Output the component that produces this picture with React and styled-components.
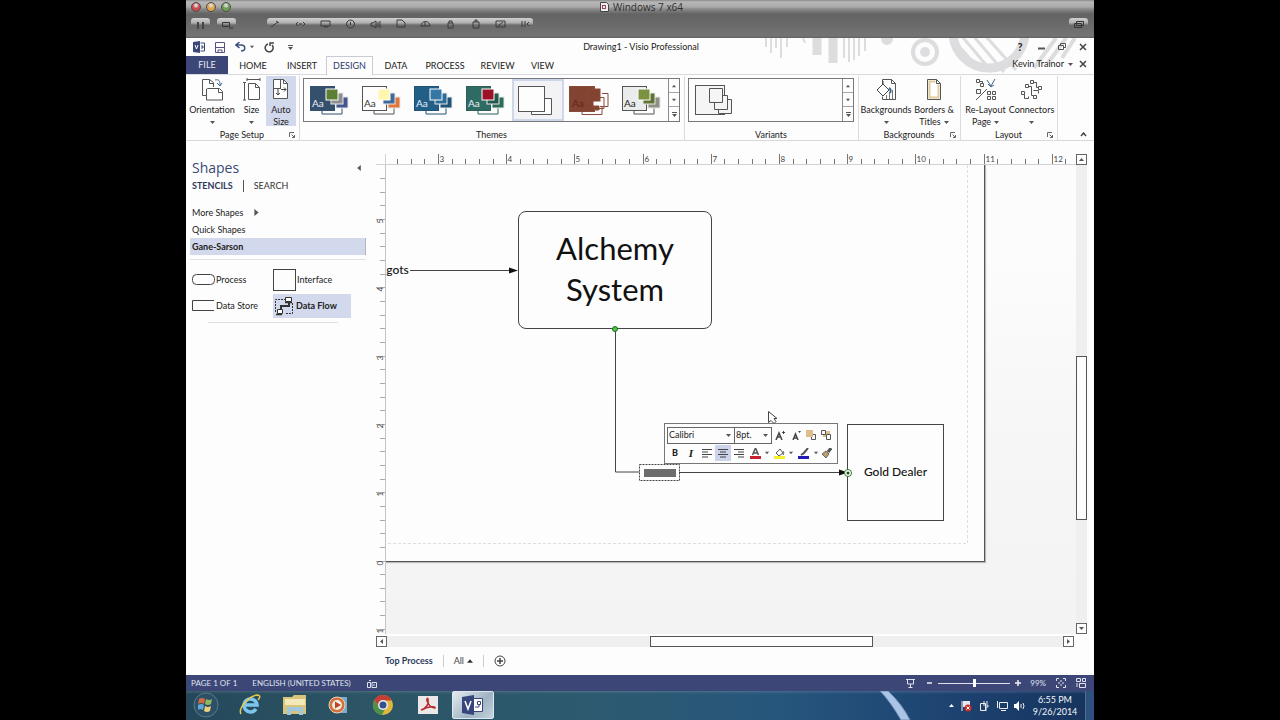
import React from "react";
import styled, { createGlobalStyle, css } from "styled-components";

const Global = createGlobalStyle`
  *, *::before, *::after { box-sizing: border-box; }
  body { margin: 0; background: #000; font-family: Lato, "Open Sans", sans-serif; font-size: 9px; line-height: 12px; color: #222; }
  button, select, input { font: inherit; color: inherit; margin: 0; padding: 0; border: 0; background: none; border-radius: 0; }
  button { cursor: default; }
  a { color: inherit; text-decoration: none; }
  svg { display: block; flex: none; }
  h2 { margin: 0; font-weight: 400; }
`;

/* ---------- frame ---------- */
const Screen = styled.div`
  min-height: 100vh;
  padding: 0 186px;
  display: flex;
  flex-direction: column;
`;
const Desktop = styled.div`
  flex: 1;
  min-width: 0;
  display: flex;
  flex-direction: column;
  background: #fdfdfd;
`;

/* ---------- virtual machine chrome ---------- */
const MacChrome = styled.header`
  height: 38px;
  padding: 0 6px 0 5px;
  background: linear-gradient(#8a8a8a 0, #b8b8b8 2px, #a9a9a9 7px, #8b8b8b 9px, #636363 14px, #686868 22px, #747474 36px, #606060 38px);
`;
const MacTitle = styled.div`
  height: 14px;
  display: grid;
  grid-template-columns: 1fr auto 1fr;
  align-items: center;
  color: #303030;
`;
const MacName = styled.span`
  display: flex;
  align-items: center;
  gap: 4px;
  padding-left: 4px;
  font-family: "Open Sans", sans-serif;
  font-size: 10px;
  line-height: 14px;
`;
const Lights = styled.div`
  display: flex;
  gap: 5px;
`;
const Light = styled.button`
  width: 10px;
  height: 10px;
  border-radius: 50%;
  border: 1px solid #4b4b4b;
  background: radial-gradient(circle at 50% 30%, #fff8 0 1px, ${(p) => p.$c} 3px);
`;
const MacTools = styled.div`
  display: flex;
  padding-top: 4px;
  gap: 7px;
`;
const MacPill = styled.div`
  height: 12px;
  padding: 0 ${(p) => p.$pad || 0}px;
  display: flex;
  gap: 11px;
  align-items: center;
  justify-content: center;
  border-radius: 3px 3px 0 0;
  background: linear-gradient(#d0d0d0, #b0b0b0 40%, #6a6a6a 60%, #6a6a6a00);
  margin-left: ${(p) => p.$left || "0"};
`;
const MacButton = styled.button`
  min-width: ${(p) => p.$w || 14}px;
  height: 12px;
  display: grid;
  place-items: center;
`;

/* ---------- application title & tabs ---------- */
const AppHead = styled.div`
  position: relative;
  border-bottom: 1px solid #d9d9dc;
`;
const Swirls = styled.svg`
  position: absolute;
  top: 0;
  right: 0;
`;
const TitleBar = styled.div`
  position: relative;
  height: 18px;
  display: grid;
  grid-template-columns: 1fr auto 1fr;
  align-items: center;
  padding: 0 5px 0 7px;
`;
const QuickAccess = styled.div`
  display: flex;
  align-items: center;
  gap: 9px;
`;
const WinButtons = styled.div`
  display: flex;
  justify-content: flex-end;
  gap: 9px;
`;
const IconButton = styled.button`
  min-width: 12px;
  height: 14px;
  display: flex;
  align-items: center;
  justify-content: center;
  gap: 4px;
  font-weight: ${(p) => (p.$bold ? 700 : 400)};
  font-size: ${(p) => (p.$bold ? 11 : 9)}px;
`;
const TabRow = styled.nav`
  position: relative;
  height: 18px;
  display: flex;
`;
const Tab = styled.button`
  width: ${(p) => p.$w}px;
  height: 19px;
  ${(p) => p.$file && css`background: #3c4677; color: #e6e8f2; height: 18px;`}
  ${(p) => p.$on && css`background: #fdfdfd; color: #2f3b6e; border: 1px solid #c9cad2; border-bottom: 0;`}
`;
const Account = styled.div`
  margin-left: auto;
  padding-right: 5px;
  display: flex;
  align-items: center;
  gap: 4px;
  height: 16px;
`;

/* ---------- ribbon ---------- */
const Ribbon = styled.div`
  height: 66px;
  display: flex;
  padding-top: 1px;
  border-bottom: 1px solid #d9d9dc;
`;
const Group = styled.section`
  width: ${(p) => p.$w || "auto"};
  flex: ${(p) => (p.$grow ? p.$grow : "none")};
  padding: 0 2px 0 1px;
  border-right: 1px solid #dcdce0;
  display: flex;
  flex-direction: column;
`;
const GroupBody = styled.div`
  height: 50px;
  flex: none;
  display: flex;
  justify-content: ${(p) => p.$j || "flex-start"};
`;
const GroupName = styled.div`
  height: 14px;
  padding-top: 3px;
  display: grid;
  grid-template-columns: 8px 1fr 8px;
  align-items: center;
  text-align: center;
`;
const BigButton = styled.button`
  width: ${(p) => p.$w}px;
  height: 50px;
  display: flex;
  flex-direction: column;
  align-items: center;
  line-height: 12px;
  padding-top: 2px;
  white-space: nowrap;
  background: ${(p) => (p.$on ? "#d3d9ec" : "none")};
`;
const IconBox = styled.span`
  height: 26px;
  flex: none;
`;
const BigLine = styled.span`
  height: 12px;
  flex: none;
  display: flex;
  align-items: center;
  gap: 3px;
`;
const Gallery = styled.div`
  flex: 1;
  height: 44px;
  margin: 2px 2px 0;
  display: flex;
  border: 1px solid #77777c;
`;
const GalleryItems = styled.div`
  flex: 1;
  display: flex;
`;
const GalleryItem = styled.button`
  width: 52px;
  height: 42px;
  display: grid;
  place-items: center;
  border: 2px solid ${(p) => (p.$on ? "#cfd6ea" : "transparent")};
  background: ${(p) => (p.$on ? "#f3f3f5" : "none")};
`;
const GallerySteps = styled.div`
  width: 11px;
  display: grid;
  grid-template-rows: repeat(3, 1fr);
  border-left: 1px solid #8c8c90;
`;
const Step = styled.button`
  display: grid;
  place-items: center;
  border-bottom: 1px solid #a5a5a8;
  &:last-child { border-bottom: 0; }
`;
const Collapse = styled.button`
  width: 36px;
  display: flex;
  justify-content: flex-end;
  align-items: flex-end;
  padding: 0 7px 3px 0;
`;

/* ---------- workspace ---------- */
const Work = styled.main`
  flex: 1;
  display: flex;
  min-height: 0;
`;
const Pane = styled.aside`
  width: 190px;
  padding: 18px 10px 0 4px;
`;
const PaneHead = styled.div`
  display: flex;
  justify-content: space-between;
  align-items: center;
  padding: 0 4px 0 2px;
  height: 18px;
`;
const PaneTitle = styled.h2`
  font-family: "Open Sans", sans-serif;
  font-size: 14px;
  line-height: 18px;
  color: #3a4a74;
`;
const PaneTabs = styled.div`
  display: flex;
  align-items: center;
  height: 18px;
  padding-left: 2px;
  margin-bottom: 9px;
`;
const PaneTab = styled.button`
  height: 12px;
  line-height: 12px;
  font-weight: ${(p) => (p.$on ? 700 : 400)};
  color: ${(p) => (p.$on ? "#2d3a5c" : "#333")};
  & + & { margin-left: 10px; padding-left: 10px; border-left: 1px solid #555; }
`;
const StencilLink = styled.a`
  display: flex;
  align-items: center;
  gap: 10px;
  height: 17px;
  padding-left: 2px;
  ${(p) => p.$on && css`background: #d3d9ec; font-weight: 700; border-right: 1px solid #b0b4c4;`}
`;
const Stencil = styled.div`
  margin-top: 4px;
  padding-top: 8px;
  border-top: 1px solid #e2e2e4;
  display: grid;
  grid-template-columns: 83px 78px;
  row-gap: 2px;
`;
const Master = styled.button`
  height: 24px;
  display: flex;
  align-items: center;
  gap: 1px;
  padding-left: ${(p) => (p.$first ? 2 : 0)}px;
  ${(p) => p.$on && css`background: #d3d9ec; font-weight: 700;`}
`;
const PaneRule = styled.div`
  height: 1px;
  margin: 4px 28px 0 18px;
  background: #e0e0e2;
`;

const Doc = styled.div`
  flex: 1;
  min-width: 0;
  display: flex;
  flex-direction: column;
  padding-top: 13px;
`;
const DocGrid = styled.div`
  flex: 1;
  display: grid;
  grid-template-columns: 10px minmax(0, 1fr) 11px;
  grid-template-rows: 11px minmax(0, 1fr) 13px;
  padding-right: 7px;
`;
const HRuler = styled.div`
  border-bottom: 1px solid #d2d2d4;
  overflow: hidden;
`;
const VRuler = styled.div`
  border-right: 1px solid #c4c4c6;
  overflow: hidden;
`;
const Corner = styled.div`
  border-right: 1px solid #d2d2d4;
  border-bottom: 1px solid #d2d2d4;
`;
const Canvas = styled.div`
  position: relative;
  overflow: hidden;
  background: linear-gradient(#fcfcfc 20%, #f6f6f6 60%, #f3f3f3);
`;
const Paper = styled.div`
  position: absolute;
  left: -10px;
  top: -10px;
  width: 609px;
  height: 407px;
  background: #fdfdfd;
  border-right: 1px solid #555;
  border-bottom: 1px solid #555;
  box-shadow: 1px 1px 1px #bbb;
`;
const Wires = styled.svg`
  position: absolute;
  left: 0;
  top: 0;
`;
const Node = styled.div`
  position: absolute;
  left: ${(p) => p.$x}px;
  top: ${(p) => p.$y}px;
  width: ${(p) => p.$w}px;
  height: ${(p) => p.$h}px;
  padding-bottom: ${(p) => (p.$plain ? 0 : 2)}px;
  display: grid;
  place-items: center;
  text-align: center;
  border: ${(p) => (p.$plain ? "0" : "1px solid #444")};
  border-radius: ${(p) => p.$r || 0}px;
  font-size: ${(p) => p.$f || 12}px;
  font-weight: ${(p) => (p.$f ? 400 : 500)};
  line-height: ${(p) => (p.$f ? 41 : 16)}px;
  color: #111;
`;
const VScroll = styled.div`
  grid-row: 1 / 3;
  grid-column: 3;
  display: flex;
  flex-direction: column;
  background: #efefef;
`;
const HScroll = styled.div`
  grid-column: 1 / 3;
  margin: 2px 2px 0 0;
  display: flex;
  background: #efefef;
`;
const ScrollButton = styled.button`
  width: 11px;
  height: 11px;
  flex: none;
  display: grid;
  place-items: center;
  border: 1px solid #666;
  background: #fdfdfd;
`;
const Lane = styled.div`
  flex: 1;
  display: flex;
  flex-direction: ${(p) => (p.$v ? "column" : "row")};
`;
const Gap = styled.div`
  flex: ${(p) => p.$n} 1 0;
`;
const Thumb = styled.div`
  flex: ${(p) => p.$n} 1 0;
  border: 1px solid #555;
  background: #fdfdfd;
`;

/* ---------- mini toolbar ---------- */
const Mini = styled.div`
  position: absolute;
  left: 278px;
  top: 258px;
  width: 174px;
  height: 41px;
  padding: 2px;
  border: 1px solid #777;
  background: #fdfdfd;
`;
const MiniRow = styled.div`
  height: 18px;
  display: flex;
  align-items: center;
`;
const Combo = styled.label`
  width: ${(p) => p.$w}px;
  height: 17px;
  display: flex;
  align-items: center;
  border: 1px solid #666;
  padding: 0 3px 0 1px;
  & + & { border-left: 0; }
`;
const Select = styled.select`
  appearance: none;
  flex: 1;
  min-width: 0;
  outline: 0;
`;
const MiniButton = styled.button`
  width: ${(p) => p.$w || 16}px;
  height: 16px;
  display: grid;
  place-items: center;
  font-size: ${(p) => (p.$i ? 11 : 9)}px;
  font-weight: ${(p) => (p.$i ? 700 : 900)};
  font-style: ${(p) => (p.$i ? "italic" : "normal")};
  font-family: ${(p) => (p.$i ? '"Liberation Serif", serif' : "inherit")};
  background: ${(p) => (p.$on ? "#ccd3ea" : "none")};
`;

/* ---------- page tabs & status ---------- */
const PageTabs = styled.div`
  height: 28px;
  display: flex;
  align-items: center;
  padding-left: 9px;
`;
const PageTab = styled.button`
  height: 12px;
  display: flex;
  align-items: center;
  gap: 3px;
  font-weight: ${(p) => (p.$on ? 700 : 400)};
  color: ${(p) => (p.$on ? "#2d3a5c" : "#444")};
  & + & { margin-left: 10px; padding-left: 10px; border-left: 1px solid #ccc; }
`;
const Status = styled.footer`
  height: 16px;
  display: flex;
  align-items: center;
  padding: 0 7px 0 5px;
  background: #3d4777;
  color: #dfe2ee;
  font-size: 8px;
`;
const StatusText = styled.span`
  margin-right: 15px;
`;
const StatusRight = styled.div`
  margin-left: auto;
  display: flex;
  align-items: center;
`;
const StatusButton = styled.button`
  min-width: 12px;
  height: 14px;
  margin-left: ${(p) => p.$l || 0}px;
  display: grid;
  place-items: center;
`;
const Zoom = styled.input`
  appearance: none;
  width: 72px;
  height: 10px;
  margin: 0 2px;
  background: linear-gradient(#dfe2ee, #dfe2ee) center / 100% 1px no-repeat;
  &::-webkit-slider-thumb { appearance: none; width: 3px; height: 8px; background: #fff; }
`;

/* ---------- taskbar ---------- */
const Taskbar = styled.footer`
  position: relative;
  height: 29px;
  display: flex;
  color: #f2f6fa;
  background:
    linear-gradient(#ffffff22, #ffffff00 3px),
    linear-gradient(90deg, #24485a, #2c5565 20%, #2d5a70 45%, #26567c 65%, #1d4271 85%, #16335c);
`;
const Streak = styled.svg`
  position: absolute;
  right: 178px;
  top: 0;
`;
const TaskButton = styled.button`
  width: ${(p) => p.$w || 44}px;
  height: 28px;
  display: grid;
  place-items: center;
  ${(p) => p.$on && css`background: linear-gradient(135deg, #e4ebf0, #9fb3c3 60%, #c6d4de); border: 1px solid #dfe8ee; border-radius: 2px; margin: 0 2px;`}
`;
const Tray = styled.div`
  position: relative;
  margin-left: auto;
  display: flex;
  align-items: center;
  gap: 6px;
`;
const Clock = styled.div`
  width: 48px;
  margin-right: 6px;
  text-align: center;
`;
const Peek = styled.button`
  width: 9px;
  height: 29px;
  margin-left: -6px;
  border-left: 1px solid #4d6d95;
  background: #2f5180;
`;

/* ---------- drawings ---------- */
const Arrow = ({ d = "down", s = 5, c = "#555" }) => {
  const pts = { down: "0,1 5,1 2.5,4", up: "0,4 5,4 2.5,1", left: "4,0 4,5 1,2.5", right: "1,0 1,5 4,2.5" }[d];
  return (
    <svg width={s} height={s} viewBox="0 0 5 5">
      <polygon points={pts} fill={c} />
    </svg>
  );
};
const Launcher = () => (
  <svg width="6" height="6" viewBox="0 0 6 6" fill="none" stroke="#666">
    <path d="M.5 5V.5H5M2.5 2.5l3 3M5.500 3v2.500H3" />
  </svg>
);
const Svg = ({ w = 14, h = w, children, ...r }) => (
  <svg width={w} height={h} viewBox={`0 0 ${w} ${h}`} fill="none" stroke="#555" {...r}>{children}</svg>
);

const MacGlyphs = [
  "M1 9l7-5M6 3l3 2", "M1 6l2-2M1 6l2 2M10 6L8 4M10 6L8 8M4 6h3", "M1 3h9v5H1zM4 9h4", "M5.500 2a4 4 0 1 0 .1 0M5.500 4v3",
  "M1 5v3h2l3 2V3L3 5zM8 4v5M10 3v7", "M2 2h5l3 3v4H2z", "M1 8a4 4 0 0 1 9 0zM5 4v4", "M3 5h5v5H3zM4 5V3h3v2", "M3 4h6v6H3zM5 4V2h2v2",
  "M1 3h9v6H1zM3 8l5-4", "M2 3v6M5 3v6M9 4L7 6l2 2",
];

const ThemeThumb = ({ bg, line, tiles, label, text = "#333" }) => (
  <svg width="40" height="32" viewBox="2 0 40 32" fill="none">
    <path d="M14 27v3h20v-8" stroke={line} />
    <rect x="2.5" y="2.5" width="24" height="24" fill={bg} stroke={line} />
    {tiles.map((t, i) => (
      <rect key={i} x={32 - i * 5 - 4} y={13 - i * 4} width="12" height="11" fill={t} stroke={i === 2 ? "#fdfdfd" : "#e8e8e8"} />
    ))}
    {label && <text x="4" y="23" fontSize="10" fill={text}>Aa</text>}
  </svg>
);
const themes = [
  { n: "Dark slate", bg: "#34506d", line: "#34506d", tiles: ["#44568f", "#8f8f8f", "#5c7f34"], label: 1, text: "#eef" },
  { n: "Office", bg: "#fdfdfd", line: "#555", tiles: ["#e0763a", "#40699c", "#fff6b0"], label: 1 },
  { n: "Ocean", bg: "#215f86", line: "#1f5478", tiles: ["#1f5478", "#2b6c98", "#3577a4"], label: 1, text: "#eef" },
  { n: "Emerald", bg: "#2e6b62", line: "#2b5f58", tiles: ["#2e6b55", "#1f5a4c", "#9b1226"], label: 1, text: "#eef" },
];
const swatches = [
  { n: "Leaf", bg: "#e9ecea", line: "#555", tiles: ["#8b8f84", "#5f7432", "#7b9340"], label: 1, text: "#222" },
];

const PlainThumb = () => (
  <svg width="40" height="32" viewBox="2 0 40 32" fill="#fdfdfd" stroke="#555">
    <path d="M28.500 14.500h7v16h-20v-3h13z" /><rect x="2.500" y="2.500" width="26" height="25" />
  </svg>
);
const BrickThumb = () => (
  <svg width="42" height="32" viewBox="1 0 42 32" stroke="#8a4a3a">
    <path d="M14 28v2.500h20v-8" fill="none" /><path d="M34 9.500h6v13h-8" fill="#fdfdfd" />
    <rect x="1.500" y="2.500" width="25" height="25" fill="#834331" /><rect x="20" y="5" width="12" height="13" fill="#834331" />
    <rect x="25.500" y="17.500" width="10" height="4" fill="#fdfdfd" stroke="none" /><path d="M30 13.500h6v11h-7" fill="none" /><path d="M27 22h4v4h-4z" fill="#834331" />
    <text x="4" y="23" fontSize="10" fill="#5e2516" stroke="none">Aa</text>
  </svg>
);
const VariantThumb = () => (
  <svg width="40" height="34" viewBox="1 0 40 34" fill="#f5f5f5" stroke="#555">
    <rect x="1.500" y="2.500" width="29" height="29" /><path d="M24.500 16.500h13v14h-13z" /><path d="M20.500 12.500h13v14h-13z" /><path d="M15.500 5.500h13v14h-13z" />
  </svg>
);

const OrientationIcon = () => (
  <Svg w={22} h={23} fill="#fdfdfd"><path d="M12.500 9V4.500l-4-3h-7v16h5M8.500 1.500v4h4" /><path d="M6.500 10.500h12l3 3v8.500h-16v-11zM17.500 10.500v4h4" /><path d="M14 2c4-1 5 1 5 5M16 5l3 3 2-3" stroke="#3f6690" fill="none" /></Svg>
);
const SizeIcon = () => (
  <Svg w={18} h={23}><path d="M4 1.500h13M4 0v3M17 0v3M1.500 4v18M0 4.500h3M0 22h3M5.500 5.500h7l4 4v12h-11zM12.500 5.500v4h4" /></Svg>
);
const AutoSizeIcon = () => (
  <Svg w={18} h={23}><path d="M1.500 1.500h10l4 4v15h-14z" fill="#fdfdfd" /><path d="M11.500 1.500v4h4M8.500 2v9M2 10.500h7" /><path d="M6 11v6M4 15l2 2 2-2M9 11.500h5M12 9.500l2 2-2 2" stroke="#444" /></Svg>
);
const BackgroundsIcon = () => (
  <Svg w={20} h={23}><path d="M6.500 8V1.500h9l4 4v16h-13v-3M15.500 1.500v4h4" /><path d="M1 12l6-6 6 6-6 6zM7 6V3" fill="#fdfdfd" stroke="#444" /><path d="M13 10c2 1 2 3 1 5" stroke="#3f6690" strokeWidth="2" /><path d="M10.500 21v-4M13.500 21v-7M16.500 21v-9" stroke="#777" /></Svg>
);
const BordersIcon = () => (
  <Svg w={16} h={23}><path d="M1.500 1.500h9l4 4v16h-13z" fill="#fdfdfd" /><path d="M9.500 3.500h-6v16h9v-13" stroke="#e0cb9c" strokeWidth="2" /><path d="M10.500 1.500v4h4" /></Svg>
);
const RelayoutIcon = () => (
  <Svg w={22} h={23}><path d="M1.500 1.500h3v3h-3zM5.500 5.500h3v3h-3zM1.500 11.500h4v4h-4zM12.500 13.500h3v3h-3zM17.500 13.500h3v3h-3zM12.500 18.500h3v3h-3zM17.500 18.500h3v3h-3zM4.500 3.500h3v2M1 22L12 11" /><path d="M12 2l4 6 4-7M13 6l3 3 3-2" stroke="#3f6690" /></Svg>
);
const ConnectorsIcon = () => (
  <Svg w={22} h={23}><path d="M9.500 2.500h3v3h-3zM17.500 8.500h3v3h-3zM4.500 6.500h3v3h-3zM.5 13.500h3v3h-3zM12.500 17.500h3v3h-3zM7.500 8.500h3v9h2M12.500 4.500h3v5h2M3.500 16.500v4h4v-2M12.500 12.500h5v3" /></Svg>
);

const HeaderArt = () => (
  <Swirls width="330" height="36" viewBox="0 0 330 36" fill="none" stroke="#dddddf" aria-hidden="true">
    <path d="M2 0v9M7 0v15M12 0v10M17 0v20M23 0v9M39 0l2 5" strokeWidth="2" />
    <path d="M53 0v17M69 0v25" strokeWidth="9" />
    <path d="M80 0v20M85 0v24M90 0v22M95 0v18M101 0v13" strokeWidth="2" />
    <circle cx="123" cy="1" r="6" fill="#dddddf" stroke="none" />
    <circle cx="161" cy="14" r="12" strokeWidth="4" /><circle cx="161" cy="14" r="5" fill="#dddddf" stroke="none" />
    <circle cx="225" cy="-6" r="36" strokeWidth="9" />
    <path d="M186 -2l30 34M196 -4l32 38M206 -6l34 40M218 -6l34 38" strokeWidth="3" />
    <path d="M270 30L292 0M284 25L302 0M298 20l13-20" strokeWidth="4" />
  </Swirls>
);

const HRulerMarks = () => {
  const marks = [];
  for (let i = -3; i < 47; i++) {
    const x = Math.round(52 + i * 13.64) + 0.5;
    const major = i % 5 === 0;
    marks.push(<path key={i} d={`M${x} ${major ? 0 : 5}v12`} stroke="#777" />);
    if (major) marks.push(<text key={"t" + i} x={x + 1} y="8" fontSize="8" fill="#444">{3 + i / 5}</text>);
  }
  return <svg width="100%" height="11">{marks}</svg>;
};
const VRulerMarks = () => {
  const marks = [];
  for (let i = -3; i < 31; i++) {
    const y = Math.round(54 + i * 13.66) + 0.5;
    const major = i % 5 === 0;
    marks.push(<path key={i} d={`M${major ? 0 : 4} ${y}h10`} stroke="#aaa" />);
    if (major) marks.push(<text key={"t" + i} transform={`translate(7 ${y + 4}) rotate(-90)`} fontSize="8" fill="#444">{Math.abs(5 - i / 5)}</text>);
  }
  return <svg width="10" height="100%">{marks}</svg>;
};

const AlignIcon = ({ k }) => (
  <Svg w={10} h={9} stroke="#444"><path d={{ l: "M0 .5h10M0 3h6M0 5.500h10M0 8h6", c: "M0 .5h10M2 3h6M0 5.500h10M2 8h6", r: "M0 .5h10M4 3h6M0 5.500h10M4 8h6" }[k]} /></Svg>
);

const shapesList = [
  { n: "Process", icon: <Svg w={23} h={12} stroke="#444"><rect x=".5" y=".5" width="22" height="10" rx="4" /></Svg> },
  { n: "Interface", icon: <Svg w={23} h={23} stroke="#444"><rect x=".5" y=".5" width="22" height="21" /></Svg> },
  { n: "Data Store", icon: <Svg w={23} h={12} stroke="#444"><path d="M22 .5H.5v10H22" /></Svg> },
  { n: "Data Flow", on: 1, icon: <Svg w={22} h={22} stroke="#333"><path d="M2.500 17V4.500H12M13 18.500h6.500V7" strokeDasharray="2 1" /><path d="M8 16V11h8V7" strokeWidth="2" /><path d="M12.500 2.500h6v4h-6z" fill="#fff" /><path d="M4.500 14.500h5v4h-5z" fill="#fff" /><path d="M3 19.500h6M12 7.500h7" strokeWidth="1.500" /></Svg> },
];

export default function App() {
  return (
    <Screen>
      <Global />
      <Desktop>
        <MacChrome>
          <MacTitle>
            <Lights>
              <Light $c="#cf4a50" aria-label="Close" />
              <Light $c="#e0a546" aria-label="Minimize" />
              <Light $c="#6ea053" aria-label="Zoom" />
            </Lights>
            <MacName>
              <Svg w={9} h={10} stroke="#444"><path d="M.5 .5h6l2 2v7h-8z" fill="#eee" /><rect x="2.500" y="3.500" width="3" height="3" stroke="#a04060" /></Svg>
              Windows 7 x64
            </MacName>
            <span />
          </MacTitle>
          <MacTools>
            <MacPill><MacButton $w={19} aria-label="Pause"><Svg w={10} h={9} stroke="#444"><path d="M2 2v7M7 2v7" strokeWidth="2" /></Svg></MacButton></MacPill>
            <MacPill><MacButton $w={19} aria-label="Snapshot"><Svg w={12} h={11} stroke="#333"><path d="M1.500 3.500h7v4h-7zM8 9h4" /></Svg></MacButton></MacPill>
            <MacPill $left="24px" $pad={1}>
              {MacGlyphs.map((d, i) => (
                <MacButton key={i} aria-label={`Device ${i + 1}`}><Svg w={11} h={12} stroke="#3a3a3a"><path d={d} /></Svg></MacButton>
              ))}
            </MacPill>
            <MacPill $left="auto"><MacButton $w={19} aria-label="Unity"><Svg w={11} h={11} stroke="#333"><path d="M3.500 2.500h7v4h-7zM1.500 4.500h7v4h-7z" /></Svg></MacButton></MacPill>
          </MacTools>
        </MacChrome>

        <AppHead>
          <HeaderArt />
          <TitleBar>
            <QuickAccess>
              <IconButton aria-label="Visio"><Svg w={12} h={12} stroke="none"><path d="M0 1l7-1v12l-7-1z" fill="#3a4677" /><path d="M7.500 2h4v8h-4" stroke="#3a4677" /><path d="M2 4l1.500 4L5 4" stroke="#fff" /><path d="M8 5h2v2H8" stroke="#3a4677" /></Svg></IconButton>
              <IconButton aria-label="Save"><Svg w={10} h={11} stroke="#5a4f80"><path d="M.5 .5h9v10h-9zM.5 5.500h9M3 10V8h4v2" /></Svg></IconButton>
              <IconButton aria-label="Undo"><Svg w={11} h={10} stroke="#3c4f7c" strokeWidth="1.500"><path d="M4.500 0L1 3l3.500 3M1 3h5c5 0 5 6 0 6" /></Svg><Arrow s={4} /></IconButton>
              <IconButton aria-label="Repeat"><Svg w={11} h={11} stroke="#444" strokeWidth="1.500"><path d="M4 2a4 4 0 1 0 4 1M6 4V1h4" /></Svg></IconButton>
              <IconButton aria-label="Customize"><Svg w={5} h={7} stroke="none" fill="#555"><path d="M0 1h5v1H0zM0 3h5L2.500 6z" /></Svg></IconButton>
            </QuickAccess>
            <span>Drawing1 - Visio Professional</span>
            <WinButtons>
              <IconButton $bold aria-label="Help">?</IconButton>
              <IconButton aria-label="Minimize"><Svg w={7} h={8}><path d="M0 5.500h7" strokeWidth="2" /></Svg></IconButton>
              <IconButton aria-label="Restore"><Svg w={8} h={8}><path d="M2.500 2V.5h5v4H6M.5 2.500h5v4h-5z" /></Svg></IconButton>
              <IconButton aria-label="Close"><Svg w={8} h={8} strokeWidth="1.500" stroke="#444"><path d="M1 1l6 6M7 1L1 7" /></Svg></IconButton>
            </WinButtons>
          </TitleBar>
          <TabRow>
            <Tab $w={42} $file>FILE</Tab>
            <Tab $w={50}>HOME</Tab>
            <Tab $w={48}>INSERT</Tab>
            <Tab $w={47} $on>DESIGN</Tab>
            <Tab $w={46}>DATA</Tab>
            <Tab $w={52}>PROCESS</Tab>
            <Tab $w={53}>REVIEW</Tab>
            <Tab $w={37}>VIEW</Tab>
            <Account>
              Kevin Trainor <Arrow />
              <IconButton aria-label="Close drawing"><Svg w={8} h={8} strokeWidth="1.500" stroke="#444"><path d="M1 1l6 6M7 1L1 7" /></Svg></IconButton>
            </Account>
          </TabRow>
        </AppHead>

        <Ribbon>
          <Group $w="114px">
            <GroupBody>
              <BigButton $w={50}><IconBox><OrientationIcon /></IconBox><BigLine>Orientation</BigLine><BigLine><Arrow /></BigLine></BigButton>
              <BigButton $w={29}><IconBox><SizeIcon /></IconBox><BigLine>Size</BigLine><BigLine><Arrow /></BigLine></BigButton>
              <BigButton $w={30} $on><IconBox><AutoSizeIcon /></IconBox><BigLine>Auto</BigLine><BigLine>Size</BigLine></BigButton>
            </GroupBody>
            <GroupName><span /><span>Page Setup</span><Launcher /></GroupName>
          </Group>
          <Group $grow="1 1 0">
            <GroupBody>
              <Gallery>
                <GalleryItems>
                  {themes.map((t) => <GalleryItem key={t.n} aria-label={t.n}><ThemeThumb {...t} /></GalleryItem>)}
                  <GalleryItem $on aria-label="No theme"><PlainThumb /></GalleryItem>
                  <GalleryItem aria-label="Brick"><BrickThumb /></GalleryItem>
                  {swatches.map((t) => <GalleryItem key={t.n} aria-label={t.n}><ThemeThumb {...t} /></GalleryItem>)}
                </GalleryItems>
                <GallerySteps>
                  <Step aria-label="Previous themes"><Arrow d="up" s={4} /></Step>
                  <Step aria-label="Next themes"><Arrow s={4} /></Step>
                  <Step aria-label="All themes"><Svg w={5} h={7} stroke="none" fill="#555"><path d="M0 1h5v1H0zM0 3h5L2.500 6z" /></Svg></Step>
                </GallerySteps>
              </Gallery>
            </GroupBody>
            <GroupName><span /><span>Themes</span><span /></GroupName>
          </Group>
          <Group $w="174px">
            <GroupBody>
              <Gallery>
                <GalleryItems><GalleryItem aria-label="Variant 1"><VariantThumb /></GalleryItem></GalleryItems>
                <GallerySteps>
                  <Step aria-label="Previous variants"><Arrow d="up" s={4} /></Step>
                  <Step aria-label="Next variants"><Arrow s={4} /></Step>
                  <Step aria-label="All variants"><Svg w={5} h={7} stroke="none" fill="#555"><path d="M0 1h5v1H0zM0 3h5L2.500 6z" /></Svg></Step>
                </GallerySteps>
              </Gallery>
            </GroupBody>
            <GroupName><span /><span>Variants</span><span /></GroupName>
          </Group>
          <Group $w="102px">
            <GroupBody $j="center">
              <BigButton $w={50}><IconBox><BackgroundsIcon /></IconBox><BigLine>Backgrounds</BigLine><BigLine><Arrow /></BigLine></BigButton>
              <BigButton $w={46}><IconBox><BordersIcon /></IconBox><BigLine>Borders &amp;</BigLine><BigLine>Titles <Arrow /></BigLine></BigButton>
            </GroupBody>
            <GroupName><span /><span>Backgrounds</span><Launcher /></GroupName>
          </Group>
          <Group $w="97px">
            <GroupBody $j="center">
              <BigButton $w={46}><IconBox><RelayoutIcon /></IconBox><BigLine>Re-Layout</BigLine><BigLine>Page <Arrow /></BigLine></BigButton>
              <BigButton $w={46}><IconBox><ConnectorsIcon /></IconBox><BigLine>Connectors</BigLine><BigLine><Arrow /></BigLine></BigButton>
            </GroupBody>
            <GroupName><span /><span>Layout</span><Launcher /></GroupName>
          </Group>
          <Collapse aria-label="Collapse ribbon"><Svg w={7} h={5} stroke="#444" strokeWidth="1.500"><path d="M1 4l2.500-3L6 4" /></Svg></Collapse>
        </Ribbon>

        <Work>
          <Pane>
            <PaneHead><PaneTitle>Shapes</PaneTitle><button aria-label="Collapse shapes"><Arrow d="left" s={6} /></button></PaneHead>
            <PaneTabs><PaneTab $on>STENCILS</PaneTab><PaneTab>SEARCH</PaneTab></PaneTabs>
            <StencilLink href="#more">More Shapes <Arrow d="right" s={7} /></StencilLink>
            <StencilLink href="#quick">Quick Shapes</StencilLink>
            <StencilLink href="#gane" $on>Gane-Sarson</StencilLink>
            <Stencil>
              {shapesList.map((s, i) => (
                <Master key={s.n} $first={i % 2 === 0} $on={s.on}>{s.icon}{s.n}</Master>
              ))}
            </Stencil>
            <PaneRule />
          </Pane>

          <Doc>
            <DocGrid>
              <Corner />
              <HRuler><HRulerMarks /></HRuler>
              <VScroll>
                <ScrollButton aria-label="Scroll up"><Arrow d="up" /></ScrollButton>
                <Lane $v><Gap $n={192} /><Thumb $n={163} /><Gap $n={103} /></Lane>
                <ScrollButton aria-label="Scroll down"><Arrow /></ScrollButton>
              </VScroll>
              <VRuler><VRulerMarks /></VRuler>
              <Canvas>
                <Paper />
                <Wires width="690" height="470" fill="none" stroke="#444">
                  <path d="M581.500 0v378.500H0" stroke="#dededf" strokeDasharray="3 2" />
                  <path d="M24 105.500h100M229.500 164v143h24M293 307.500h162" />
                  <path d="M123 102.500l9 3-9 3zM453 304.500l9 3-9 3z" fill="#111" stroke="none" />
                  <rect x="253.500" y="299.500" width="40" height="16" strokeDasharray="2 1" />
                  <rect x="258" y="304" width="32" height="8" fill="#6c6c6c" stroke="none" />
                </Wires>
                <Node $x={0} $y={97} $w={23} $h={16} $plain>gots</Node>
                <Node $x={132} $y={46} $w={194} $h={118} $r={8} $f={31}>Alchemy<br />System</Node>
                <Node $x={461} $y={259} $w={97} $h={97}>Gold Dealer</Node>
                <Wires width="690" height="470" fill="none">
                  <circle cx="229" cy="164" r="2.500" fill="#4cc83c" stroke="#1e6a1c" />
                  <circle cx="462" cy="308" r="3.500" fill="#fff" stroke="#2e7a34" /><circle cx="462" cy="308" r="1.500" fill="#144a18" />
                </Wires>
                <Mini role="toolbar">
                  <MiniRow>
                    <Combo $w={68}><Select aria-label="Font"><option>Calibri</option></Select><Arrow /></Combo>
                    <Combo $w={37}><Select aria-label="Font size"><option>8pt.</option></Select><Arrow /></Combo>
                    <MiniButton aria-label="Grow font"><Svg w={10} h={10} stroke="#444"><path d="M1 10l3-7 3 7M2 7h4" strokeWidth="1.500" /><path d="M7 2.500h3M8.500 1v3" /></Svg></MiniButton>
                    <MiniButton aria-label="Shrink font"><Svg w={10} h={10} stroke="#444"><path d="M2 10l2.500-6L7 10M3 8h3" strokeWidth="1.500" /><path d="M7 1h3L8.500 3z" fill="#444" stroke="none" /></Svg></MiniButton>
                    <MiniButton $w={15} aria-label="Bring to front"><Svg w={11} h={10}><path d="M5.500 4.500h4v5h-4z" /><path d="M0 0h7v7H0z" fill="#e0bd8c" stroke="none" /></Svg></MiniButton>
                    <MiniButton $w={15} aria-label="Send to back"><Svg w={11} h={10}><path d="M2 1h7v6H2z" fill="#e0bd8c" stroke="none" /><path d="M.5 .5h4v4h-4zM5.500 4.500h4v5h-4z" fill="#fdfdfd" /></Svg></MiniButton>
                  </MiniRow>
                  <MiniRow>
                    <MiniButton>B</MiniButton>
                    <MiniButton $i>I</MiniButton>
                    <MiniButton aria-label="Align left"><AlignIcon k="l" /></MiniButton>
                    <MiniButton $on aria-label="Center"><AlignIcon k="c" /></MiniButton>
                    <MiniButton aria-label="Align right"><AlignIcon k="r" /></MiniButton>
                    <MiniButton aria-label="Font color"><Svg w={11} h={11}><path d="M2.500 7L5.500 0l3 7M3.500 5h4" strokeWidth="1.500" /><path d="M0 8h11v3H0z" fill="#c8202c" stroke="none" /></Svg></MiniButton>
                    <MiniButton $w={8} aria-label="Font color options"><Arrow s={4} /></MiniButton>
                    <MiniButton aria-label="Fill"><Svg w={11} h={11}><path d="M2 5l4-4 3 4-4 3zM9 3c1 1 1 2 0 4" /><path d="M0 8h11v3H0z" fill="#f4f02c" stroke="none" /></Svg></MiniButton>
                    <MiniButton $w={8} aria-label="Fill options"><Arrow s={4} /></MiniButton>
                    <MiniButton $w={17} aria-label="Line"><Svg w={12} h={11}><path d="M10 0L5 6M3 7l3-2" strokeWidth="2" /><path d="M0 8h11v3H0z" fill="#2318b8" stroke="none" /></Svg></MiniButton>
                    <MiniButton $w={7} aria-label="Line options"><Arrow s={4} /></MiniButton>
                    <MiniButton aria-label="Format painter"><Svg w={10} h={10}><path d="M9 0L6 4" strokeWidth="3" /><path d="M0 6l4-3 3 3-3 4z" fill="#bfa06b" stroke="#666" /></Svg></MiniButton>
                  </MiniRow>
                </Mini>
                <Wires width="690" height="300" fill="#fdfdfd" stroke="#444">
                  <path d="M382.500 246.500v11l2.500-2 3 3 2-2-2-3h3z" />
                </Wires>
              </Canvas>
              <HScroll>
                <ScrollButton aria-label="Scroll left"><Arrow d="left" /></ScrollButton>
                <Lane><Gap $n={264} /><Thumb $n={221} /><Gap $n={191} /></Lane>
                <ScrollButton aria-label="Scroll right"><Arrow d="right" /></ScrollButton>
              </HScroll>
            </DocGrid>
            <PageTabs>
              <PageTab $on>Top Process</PageTab>
              <PageTab>All <Arrow d="up" s={6} c="#333" /></PageTab>
              <PageTab aria-label="New page"><Svg w={12} h={12} stroke="#444"><circle cx="6" cy="6" r="5" /><path d="M3 6h6M6 3v6" strokeWidth="1.500" /></Svg></PageTab>
            </PageTabs>
          </Doc>
        </Work>

        <Status>
          <StatusText>PAGE 1 OF 1</StatusText>
          <StatusText>ENGLISH (UNITED STATES)</StatusText>
          <StatusButton aria-label="Macros"><Svg w={10} h={9} stroke="#dfe2ee"><path d="M2 1.500h2M.5 3.500h3v5h-3zM5 3.500h4.500v5H5zM6 6h2" /></Svg></StatusButton>
          <StatusRight>
            <StatusButton aria-label="Presentation mode"><Svg w={9} h={9} stroke="#dfe2ee"><path d="M0 .5h9M1.500 1v4h6V1M4.500 5v3M2.500 8.500h4" /></Svg></StatusButton>
            <StatusButton $l={8} aria-label="Zoom out"><Svg w={6} h={6} stroke="#eee"><path d="M0 3h5" strokeWidth="1.500" /></Svg></StatusButton>
            <Zoom type="range" aria-label="Zoom" min="0" max="100" defaultValue="51" />
            <StatusButton aria-label="Zoom in"><Svg w={6} h={6} stroke="#eee"><path d="M0 3h6M3 0v6" strokeWidth="1.500" /></Svg></StatusButton>
            <StatusButton $l={6}>99%</StatusButton>
            <StatusButton $l={9} aria-label="Fit page"><Svg w={10} h={10} stroke="#dfe2ee"><path d="M.5 3V.5H3M7 .5h2.500V3M9.500 7v2.500H7M3 9.500H.5V7M5 2v2M5 6v2M2 5h2M6 5h2" /></Svg></StatusButton>
            <StatusButton $l={8} aria-label="Switch windows"><Svg w={10} h={10} stroke="#dfe2ee"><path d="M.5 .5h4v3h-4zM6.500 .5h3v3h-3zM3.500 5.500h6v4h-6zM1 5v4" /></Svg></StatusButton>
          </StatusRight>
        </Status>

        <Taskbar>
          <Streak width="40" height="29" viewBox="0 0 40 29" aria-hidden="true"><path d="M4 0h8q14 13 22 29h-9Q14 10 4 0z" fill="#a9c4e6" stroke="#6f8fb5" /></Streak>
          <TaskButton $w={40} aria-label="Start"><Svg w={26} h={26} stroke="none"><circle cx="13" cy="13" r="12" fill="#2d5068" stroke="#5d7988" /><path d="M6 7q3-2 6 0l-1 5q-3-2-6 0z" fill="#d06a42" /><path d="M13 7q3 2 6 0l-1 5q-3 2-6 0z" fill="#8fb860" /><path d="M5 13q3-2 6 0l-1 5q-3-2-5 0z" fill="#62a9d8" /><path d="M12 14q3 2 6 0l-1 5q-3 2-6 0z" fill="#ecd078" /></Svg></TaskButton>
          <TaskButton $w={48} aria-label="Internet Explorer"><Svg w={22} h={22} stroke="none"><path d="M17 15a6.500 6.500 0 1 1 1-4H6" stroke="#7cc6ee" strokeWidth="3.500" /><path d="M2 20C-1 15 9 2 18 1c4 0 3 3 1 5" stroke="#e8c84e" strokeWidth="1.500" /></Svg></TaskButton>
          <TaskButton $w={42} aria-label="File Explorer"><Svg w={26} h={22} stroke="none"><path d="M1 3h9l2-2h12v19H1z" fill="#d9c47c" /><path d="M3 5h20v6H3z" fill="#f3e9b8" /><path d="M5 13h16v8h-4v-4H9v4H5z" fill="#9fc8de" /></Svg></TaskButton>
          <TaskButton aria-label="Media Player"><Svg w={20} h={20} stroke="none"><path d="M6 2h13v16H6z" fill="#7fa9c6" /><circle cx="9" cy="10" r="8" fill="#d3713a" stroke="#e6d3c4" /><circle cx="9" cy="10" r="5" fill="#f4ece6" /><path d="M7 6.500l6 3.500-6 3.500z" fill="#b84a20" /></Svg></TaskButton>
          <TaskButton $w={46} aria-label="Chrome"><Svg w={22} h={22} stroke="none"><circle cx="11" cy="11" r="10" fill="#e0b93c" /><path d="M2.300 6A10 10 0 0 1 20 6.500H11L7 13z" fill="#c43f33" /><path d="M2.300 6A10 10 0 0 0 10 21l4-8H7z" fill="#4f9148" /><circle cx="11" cy="11" r="5" fill="#eef" /><circle cx="11" cy="11" r="3.500" fill="#35528a" /></Svg></TaskButton>
          <TaskButton aria-label="Adobe Reader"><Svg w={20} h={20} stroke="none"><path d="M0 1h20v18H0z" fill="#ece8e8" /><path d="M3 15c5-2 8-6 7-11-1-2-2 1 0 4 2 4 4 5 7 5 1-2-7-2-13 2" stroke="#b8282c" strokeWidth="1.500" /></Svg></TaskButton>
          <TaskButton $w={42} $on aria-label="Visio"><Svg w={22} h={20} stroke="none"><path d="M11.500 3.500h9v13h-9z" fill="#fff" stroke="#3a4677" /><path d="M13 12h4v-3M15.500 6.500h3v3h-3z" stroke="#3a4677" /><path d="M0 2l12-2v20L0 18z" fill="#38447c" /><path d="M3 6l3 8 3-8" stroke="#fff" strokeWidth="1.500" /></Svg></TaskButton>
          <Tray>
            <Arrow d="up" c="#fff" />
            <Svg w={12} h={12} stroke="none"><path d="M2 1v10" stroke="#eee" /><path d="M3 1h7v6H3z" fill="#e6e9ee" /><circle cx="8" cy="8" r="3.500" fill="#c9302c" /><path d="M6.500 6.500l3 3M9.500 6.500l-3 3" stroke="#fff" /></Svg>
            <Svg w={12} h={12} stroke="#eee"><path d="M2.500 3.500h5v7h-5zM6 1v3M9 1v3M5 5h5v2H8v4" /></Svg>
            <Svg w={12} h={12} stroke="#eee"><path d="M3.500 2.500h8v6h-8zM1.500 1v7M5 10.500h5" /></Svg>
            <Svg w={11} h={12} stroke="#eee"><path d="M0 4h2l3-3v10L2 8H0z" fill="#fff" stroke="none" /><path d="M7 4v4M9 3q2 3 0 6" /></Svg>
            <Clock>6:55 PM<br />9/26/2014</Clock>
            <Peek aria-label="Show desktop" />
          </Tray>
        </Taskbar>
      </Desktop>
    </Screen>
  );
}
